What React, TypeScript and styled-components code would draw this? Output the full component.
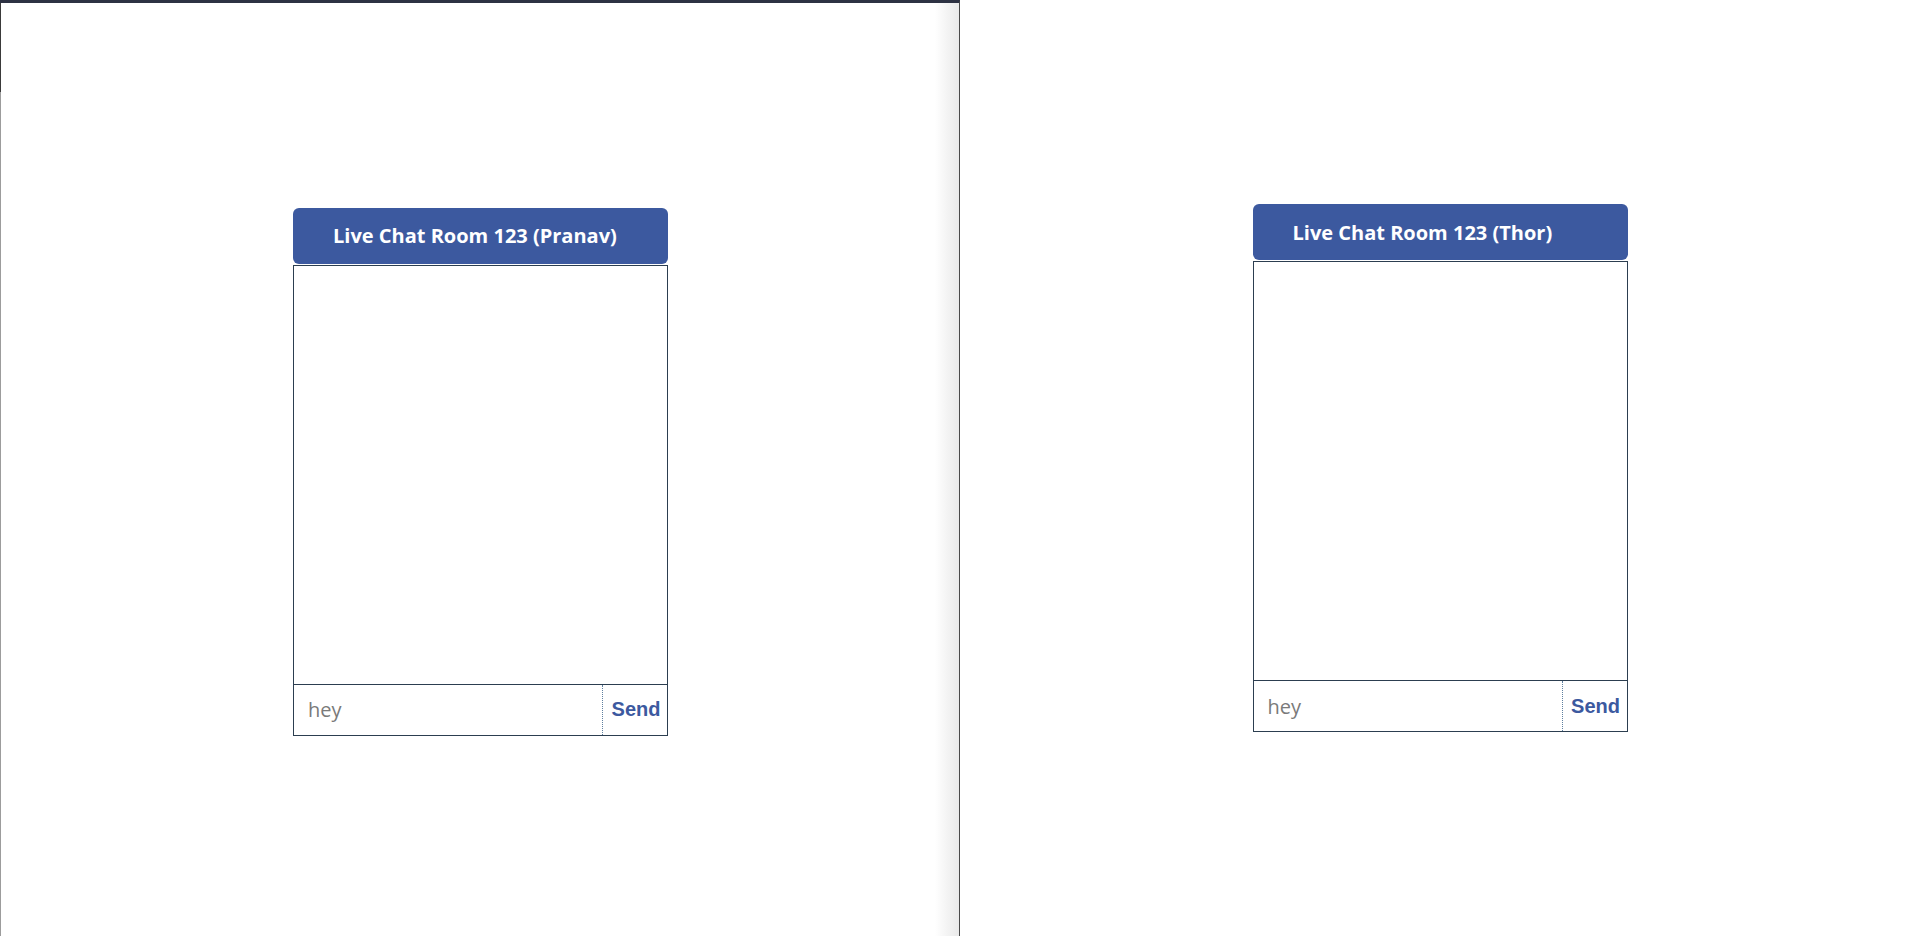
import React from "react";
import styled, { createGlobalStyle } from "styled-components";

const GlobalStyle = createGlobalStyle`
  html, body { margin: 0; padding: 0; background: #ffffff; }
  body { font-family: "Open Sans", "Liberation Sans", sans-serif; overflow: hidden; }
  * { box-sizing: border-box; }
`;

const Screen = styled.div`
  display: flex;
  width: 1920px;
  height: 936px;
`;

const Window = styled.div<{ $framed?: boolean }>`
  width: 960px;
  height: 936px;
  display: flex;
  align-items: center;
  justify-content: center;
  background: #ffffff;
  ${(p) =>
    p.$framed &&
    `
    padding: 4px 0 0 2px;
    border-top: 3px solid #2d3243;
    border-right: 1px solid #4a4a4a;
    background:
      linear-gradient(to bottom, #3a3a3a 89px, #9c9c9c 89px) left top / 1px 100% no-repeat,
      linear-gradient(to right, #ffffff calc(100% - 24px), #e9e9e9 100%);
  `}
`;

const ChatBox = styled.div`
  width: 375px;
  display: flex;
  flex-direction: column;
  gap: 1px;
`;

const Header = styled.div`
  height: 56px;
  background: #3c599f;
  border-radius: 6px;
  display: flex;
  align-items: center;
  padding-left: 40px;
  color: #ffffff;
  font-family: "Open Sans", sans-serif;
  font-weight: 700;
  font-size: 20px;
`;

const Body = styled.div`
  border: 1px solid #2c3e50;
  display: flex;
  flex-direction: column;
`;

const Messages = styled.div`
  height: 418px;
`;

const InputRow = styled.div`
  display: flex;
  height: 51px;
  border-top: 1px solid #2c3e50;
`;

const TextInput = styled.input`
  flex: 1;
  min-width: 0;
  border: none;
  outline: none;
  padding: 0 14px;
  font-family: "Open Sans", sans-serif;
  font-size: 20px;
  color: #333;
  background: transparent;
  &::placeholder { color: #7a7a7a; }
`;

const SendButton = styled.button`
  width: 65px;
  border: none;
  border-left: 1px dotted #5f7f9f;
  background: #ffffff;
  color: #3c599f;
  font-family: "Liberation Sans", Arial, sans-serif;
  font-weight: 700;
  font-size: 20px;
  padding: 0 0 0 2px;
  cursor: pointer;
`;

function Chat({ name }: { name: string }) {
  return (
    <ChatBox>
      <Header>Live Chat Room 123 ({name})</Header>
      <Body>
        <Messages />
        <InputRow>
          <TextInput placeholder="hey" />
          <SendButton>Send</SendButton>
        </InputRow>
      </Body>
    </ChatBox>
  );
}

export default function App() {
  return (
    <>
      <GlobalStyle />
      <Screen>
        <Window $framed>
          <Chat name="Pranav" />
        </Window>
        <Window>
          <Chat name="Thor" />
        </Window>
      </Screen>
    </>
  );
}
